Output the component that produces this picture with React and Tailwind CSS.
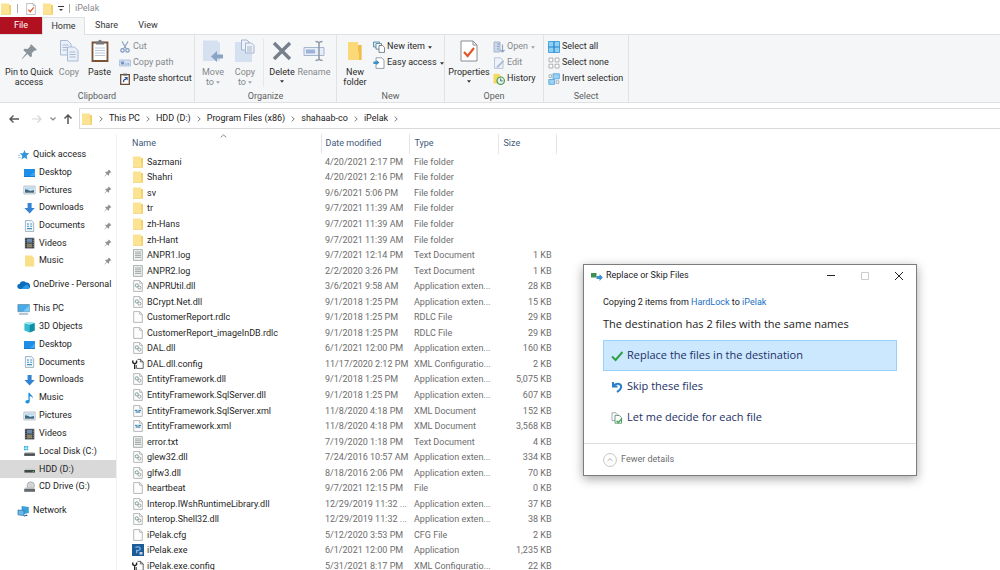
import React, { useState } from 'react';

const Folder = ({ className = 'w-3 h-3' }) => (
  <svg viewBox="0 0 12 12" className={className}>
    <path d="M1 .5h8v1.5h2v9.5H1z" fill="#fbe393" />
    <path d="M9 2h2v9.5H9.6V7.5L9 7z" fill="#f2cf69" />
    <path d="M1 11h9.5v.6H1z" fill="#eecb68" />
  </svg>
);

const Page = ({ children }) => (
  <svg viewBox="0 0 12 12" className="w-3 h-3">
    <path d="M1.7.6h6l2.600 2.600v8.200H1.700z" fill="#fdfdfd" stroke="#a3a6a8" strokeWidth=".8" />
    <path d="M7.600.6v2.700h2.700" fill="none" stroke="#a3a6a8" strokeWidth=".7" />
    {children}
  </svg>
);

const FileIcon = ({ kind }) => {
  switch (kind) {
    case 'folder':
      return <Folder />;
    case 'text':
      return (
        <svg viewBox="0 0 12 12" className="w-3 h-3">
          <path d="M1.500.6h8.800v10.800H1.500z" fill="#f1f2f2" stroke="#98a0a0" strokeWidth=".8" />
          <path d="M3 3h6M3 4.800h6M3 6.600h6M3 8.400h6" stroke="#8b9494" strokeWidth=".8" />
        </svg>
      );
    case 'dll':
      return (
        <Page>
          <circle cx="4.800" cy="5.400" r="1.600" fill="none" stroke="#7d9a96" strokeWidth="1" />
          <circle cx="7.400" cy="7.600" r="1.500" fill="none" stroke="#8fa3a0" strokeWidth="1" />
        </Page>
      );
    case 'xml':
      return (
        <Page>
          <path d="M2.800 4.600h6.400v3.600H2.800z" fill="#cfe3ee" />
          <path d="M3 5.400h2.200M6.400 5.400H9M4 7h4" stroke="#3c7fa3" strokeWidth="1" />
        </Page>
      );
    case 'config':
      return (
        <svg viewBox="0 0 12 12" className="w-3 h-3">
          <path d="M5.500 1.400h3l2.700 2.400v6.600H4.500V7" fill="#fff" stroke="#444" strokeWidth=".8" />
          <path d="M8.400 1.400v2.500h2.800" fill="none" stroke="#444" strokeWidth=".8" />
          <path d="M.8 2.500v2.200l1.900 1.200 1.900-1.200V2.500M2.700 5.500v5.400" fill="none" stroke="#222" strokeWidth="1.400" />
        </svg>
      );
    case 'exe':
      return (
        <svg viewBox="0 0 12 12" className="w-3 h-3">
          <path d="M0 0h12v12H0z" fill="#1d5a96" />
          <path d="M3.400 3.600c2-1.600 5-.6 4.800 1.400-.2 1.500-2 1.700-3.600 1.500v2.800" fill="none" stroke="#7db8e8" strokeWidth="1.300" />
          <path d="M7.500 8h3v2.600h-3z" fill="#c8d4dc" />
        </svg>
      );
    default:
      return <Page />;
  }
};

const NavIcon = ({ kind }) => {
  const paths = {
    star: (
      <>
        <path d="M7.500 1l1.200 3.100 3.600.2-2.700 2.400.8 3.600-3-1.800-2.900 2 .9-3.800-2.800-2.200 3.500-.3z" fill="#2f95dd" />
        <path d="M1 6.500h2M1.200 8.500h2.200" stroke="#7fbfee" strokeWidth=".8" />
      </>
    ),
    desktop: (
      <>
        <path d="M1 2h11v8H1z" fill="#1d8fe8" />
        <path d="M6 10l6-6v6z" fill="#3aa8f5" />
        <path d="M1 9.200h11v.8H1z" fill="#1173c4" />
      </>
    ),
    pictures: (
      <>
        <path d="M.9 2.100h11.200v7.800H.9z" fill="#fff" stroke="#a0acb5" strokeWidth=".8" />
        <path d="M2 3.200h9v2.400H2z" fill="#b5d9f2" />
        <path d="M2 5.200l3 .6 2 1 4-.8v2.800H2z" fill="#3f6a85" />
      </>
    ),
    downloads: <path d="M4.600 1h4v5h3.200l-5.200 5.400L1.400 6h3.200z" fill="#3384d4" />,
    documents: (
      <>
        <path d="M2.400.6h6l2.300 2.200v8.600H2.400z" fill="#f4fafd" stroke="#8ba1b0" strokeWidth=".8" />
        <path d="M4 4h2M7.200 4h2M4 6.200h2M7.200 6.200h2M4 8.600h5" stroke="#3f8fc0" strokeWidth="1.100" />
      </>
    ),
    videos: (
      <>
        <path d="M1.900.8h9.400v10.600H1.900z" fill="#343a42" />
        <path d="M4 1.600h5.200v4H4z" fill="#6d89a8" />
        <path d="M4 6.500h5.200v4H4z" fill="#8c8468" />
        <path d="M2.900 1.200v10M10.300 1.200v10" stroke="#c9ccd0" strokeWidth=".7" strokeDasharray="1 1" />
      </>
    ),
    folder: <path d="M2 .6h7.500v1.600h1.700v9.300H2z" fill="#fbdf88" />,
    cloud: (
      <>
        <path d="M3 10a2.600 2.600 0 01-.3-5.200A3.600 3.600 0 019 3.600 3.200 3.200 0 0110.600 10z" fill="#0f6cbd" />
        <path d="M4 10l5-4.200a2.400 2.400 0 012.800 1.400A1.600 1.600 0 0111 10z" fill="#2b9be8" />
      </>
    ),
    pc: (
      <>
        <path d="M.9 1.500h11.400v7.200H.9z" fill="#45abe9" stroke="#5f87a3" strokeWidth=".7" />
        <path d="M6 8.500l6-6v6z" fill="#7ac8f6" />
        <path d="M2 10.500h9v1H2z" fill="#6e8ea5" />
      </>
    ),
    cube: (
      <>
        <path d="M1.400 2.600L5 1l6.600 1v7.600L6.600 11.400 1.400 9.600z" fill="#36bcd0" />
        <path d="M6.600 3.800l5-1.800v7.600l-5 1.800z" fill="#138ca6" />
        <path d="M1.400 2.600L5 1l6.600 1-5 1.800z" fill="#9be8ef" />
      </>
    ),
    music: <path d="M5.400.8h1.300c.3 2 3.500 2.600 3.200 5.600-.5-1.300-1.600-2-3.200-2.100v4.900c0 1.300-1 2.200-2.300 2.200s-2-.7-2-1.600c0-1.200 1.400-2 3-1.700z" fill="#1a93dc" />,
    disk: (
      <>
        <path d="M1 1h1.800v1.800H1zM3.400 1h1.800v1.800H3.400zM1 3.400h1.800v1.800H1zM3.400 3.400h1.800v1.800H3.400z" fill="#27b2e0" />
        <path d="M2.200 7h8.800l1 1.500H1.200z" fill="#c3c8cb" />
        <path d="M1.200 8.300H12v2.600H1.200z" fill="#4a5054" />
      </>
    ),
    drive: (
      <>
        <path d="M2.400 5.600h8.400l1 1.600H1.400z" fill="#c9cccd" />
        <path d="M1.400 7H12v2.600H1.400z" fill="#3e4a46" />
        <path d="M9.600 8h1.400v.8H9.600z" fill="#4fd07a" />
      </>
    ),
    cd: (
      <>
        <circle cx="7.800" cy="4.500" r="3.700" fill="#d5d7d9" stroke="#9b9fa3" strokeWidth=".7" />
        <circle cx="7.800" cy="4.500" r="1" fill="#fff" stroke="#9b9fa3" strokeWidth=".5" />
        <path d="M1.200 8h10.800v2.800H1.200z" fill="#65696c" />
        <path d="M2.200 6.600h8.600l1.200 1.500H1.200z" fill="#b9bdbf" />
      </>
    ),
    network: (
      <>
        <path d="M4.600 1l7.200 1v6l-7.200 1.400z" fill="#3c9fdc" />
        <path d="M1 5l6 .6v5L1 9.800z" fill="#68b9ea" stroke="#2472a8" strokeWidth=".7" />
        <path d="M7 10.400l3-.8.600 1.200-3.600.8z" fill="#37607d" />
      </>
    ),
  };
  return (
    <svg viewBox="0 0 13 12" className="w-[13px] h-3 shrink-0">
      {paths[kind]}
    </svg>
  );
};

const PinIcon = ({ className, fill }) => (
  <svg viewBox="0 0 12 12" className={className}>
    <path d="M7.200.8l4 4-1 .6-.7-.1-1.900 2 .1 2-.9.800L4.500 7.800 1 11.200l-.4-.3 3.200-3.800L1.600 4.900l.9-.8 2.200.1 1.900-1.900-.1-.8z" fill={fill} />
  </svg>
);

const Caret = ({ className = 'text-[#333]' }) => (
  <svg viewBox="0 0 5 3" className={`w-1 h-[3px] ${className}`}>
    <path d="M0 0h5L2.500 3z" fill="currentColor" />
  </svg>
);

const CheckPage = ({ className }) => (
  <svg viewBox="0 0 18 22" className={className}>
    <path d="M1 1h12l4 4v16H1z" fill="#fff" stroke="#8a8d90" />
    <path d="M13 1v4h4" fill="none" stroke="#8a8d90" />
    <path d="M4 12l3.600 4L14 8" fill="none" stroke="#e0592a" strokeWidth="2.200" />
  </svg>
);

const bigIcons = {
  pin: <PinIcon className="w-[17px] h-[17px]" fill="#8a9399" />,
  copy: (
    <svg viewBox="0 0 20 24" className="w-5 h-6">
      <path d="M1.500 1.500h7l3.500 3.500v11H1.500z" fill="#eaf0f9" stroke="#a9bad4" />
      <path d="M3.500 6h6M3.500 8.500h6M3.500 11h6" stroke="#a9bad4" />
      <path d="M8.500 8h7l3.500 3.500V22H8.500z" fill="#eaf0f9" stroke="#a9bad4" />
      <path d="M10.500 13h6M10.500 15.500h6M10.500 18h6" stroke="#a9bad4" />
    </svg>
  ),
  paste: (
    <svg viewBox="0 0 18 24" className="w-[18px] h-6">
      <path d="M1.500 3.500h15v18.500h-15z" fill="#fff" stroke="#7a5236" strokeWidth="1.800" />
      <path d="M5 2.500h2.200a1.800 1.800 0 013.600 0H13v3H5z" fill="#78797c" />
      <path d="M4 9h10M4 11.500h10M4 14h10M4 16.500h10" stroke="#b9c9dd" />
    </svg>
  ),
  move: (
    <svg viewBox="0 0 22 24" className="w-[22px] h-6">
      <path d="M1 1.500h15v2h2V22H1z" fill="#d5e0f0" />
      <path d="M21 15.500h-6V12l-6 5.500 6 5.500v-3.500h6z" fill="#8ba3c4" />
    </svg>
  ),
  copyto: (
    <svg viewBox="0 0 22 24" className="w-[22px] h-6">
      <path d="M1 3h15v2h2V23H1z" fill="#d5e0f0" />
      <path d="M7.500 1h5.500l2 2v8H7.500z" fill="#eef3fa" stroke="#a3b5d0" />
      <path d="M11.500 4h6l2.500 2.500V14h-8.500z" fill="#eef3fa" stroke="#a3b5d0" />
      <path d="M13 8h5M13 10h5M13 12h5" stroke="#a3b5d0" />
    </svg>
  ),
  del: (
    <svg viewBox="0 0 20 22" className="w-5 h-[22px]">
      <path d="M2 3l16 16M18 3L2 19" stroke="#75808c" strokeWidth="3.400" />
    </svg>
  ),
  rename: (
    <svg viewBox="0 0 22 22" className="w-[22px] h-[22px]">
      <path d="M1 7.500h20v8H1z" fill="#e6edf7" stroke="#a6b6cf" />
      <path d="M3 9.500h9v4H3z" fill="#9db4d6" />
      <path d="M12.500 1.500c2 0 3 .5 3.500 1.500.5-1 1.500-1.500 3.500-1.500M16 3v16M12.500 20.500c2 0 3-.5 3.500-1.500.5 1 1.500 1.500 3.500 1.500" fill="none" stroke="#8c97a6" strokeWidth="1.500" />
    </svg>
  ),
  newfolder: (
    <svg viewBox="0 0 16 22" className="w-4 h-[22px]">
      <path d="M1 2h10v3h3.500v15H1z" fill="#fbd978" />
      <path d="M11 5h3.500v15H12v-8l-1-1z" fill="#efbd4b" />
    </svg>
  ),
  properties: <CheckPage className="w-[18px] h-[22px]" />,
};

const smallIcons = {
  cut: (
    <>
      <path d="M3 .5l4.200 7M9 .5l-4.200 7" stroke="#8ba0bd" strokeWidth="1.200" />
      <circle cx="3.500" cy="9.400" r="1.700" fill="none" stroke="#7c97c0" strokeWidth="1.200" />
      <circle cx="8.500" cy="9.400" r="1.700" fill="none" stroke="#7c97c0" strokeWidth="1.200" />
    </>
  ),
  path: (
    <>
      <path d="M.5 3h11v6H.5z" fill="#d3e0f3" stroke="#a9bcdc" strokeWidth=".8" />
      <path d="M2 4.500l1 3 1-3 1 3M6.500 7h1M8.500 7h1.500" fill="none" stroke="#5e7eb0" strokeWidth=".9" />
    </>
  ),
  shortcut: (
    <>
      <path d="M1.700 1.700h8.600v9.600H1.700z" fill="#fff" stroke="#6b4a35" strokeWidth="1.300" />
      <path d="M4 .6h4v2H4z" fill="#666" />
      <path d="M4.600 9.200c-.3-2 .7-3 2.500-3.100" fill="none" stroke="#2a4d8f" strokeWidth="1.300" />
      <path d="M5.200 4h3.400v3.400z" fill="#2a4d8f" />
    </>
  ),
  newitem: (
    <>
      <path d="M.5 1h6v5h-6z" fill="#d5ecf7" stroke="#4f8ba8" strokeWidth=".9" />
      <path d="M3 2.600h5.500v5.500H3z" fill="#fff" stroke="#5c7f93" strokeWidth=".9" />
      <path d="M6 4.500h3.600l1.900 1.900v5H6z" fill="#fff" stroke="#6c7a85" strokeWidth=".9" />
    </>
  ),
  easy: (
    <>
      <path d="M3 .8h5.600L11 3v8.400H3z" fill="#fff" stroke="#8c98a1" strokeWidth=".9" />
      <path d="M.4 7V4.400h3V3l3 2.600-3 2.600V7z" fill="#3d8fc4" />
    </>
  ),
  open: (
    <>
      <path d="M1 1h6v10H1z" fill="#cad7ea" stroke="#9fb0ca" strokeWidth=".9" />
      <path d="M4 3h3M4 5.500h2M4 8h2" stroke="#8499bd" strokeWidth=".9" />
      <path d="M9.500 3.500v7.500M7.500 9l2 2 2-2" fill="none" stroke="#8da3c7" strokeWidth="1.200" />
    </>
  ),
  edit: (
    <>
      <path d="M1.500.8h6l2.500 2.400v8.200H1.500z" fill="#eef2f9" stroke="#b3bfd2" strokeWidth=".9" />
      <path d="M4 9l5.800-5.600 1.200 1.200-5.600 5.600-2 .6z" fill="#a7b9d6" />
    </>
  ),
  history: (
    <>
      <path d="M.5.8h6v1.400H8v8.300H.5z" fill="#f5da62" />
      <circle cx="7.700" cy="7.700" r="3.700" fill="#e7f5ea" stroke="#4a9a5b" strokeWidth="1.200" />
      <path d="M7.700 5.400v2.500h1.900" fill="none" stroke="#3b5878" strokeWidth=".9" />
    </>
  ),
  all: (
    <>
      <path d="M.5.5h11v11H.5z" fill="#8fd0f6" stroke="#3f9bd6" strokeWidth=".9" />
      <path d="M6 .5v11M.5 6h11" stroke="#2a84c4" strokeWidth="1.200" />
    </>
  ),
  none: (
    <path d="M1 1h3.800v3.800H1zM7.200 1H11v3.800H7.200zM1 7.200h3.800V11H1zM7.200 7.200H11V11H7.200z" fill="#fff" stroke="#9a9ea2" strokeWidth=".8" />
  ),
  invert: (
    <>
      <path d="M5 .8h6.300v5H5zM.8 6.500h5.800v4.800H.8z" fill="#9ad3f5" stroke="#4aa0d8" strokeWidth=".8" />
      <path d="M1 1.800h2.600v2.600H1zM8.200 7.800h2.600v2.600H8.200z" fill="#fff" stroke="#9a9ea2" strokeWidth=".8" />
    </>
  ),
};

const BigButton = ({ icon, lines, muted, caret, className }) => (
  <button className={`flex flex-col items-center shrink-0 ${className} ${muted ? 'text-[#84888c]' : 'text-[#2b2b2b]'}`}>
    <span className="h-6 flex items-center justify-center mb-1">{bigIcons[icon]}</span>
    {lines.map((line, i) => (
      <span key={line} className="leading-[10px] whitespace-nowrap flex items-center gap-[2px]">
        {line}
        {caret && lines.length > 1 && i === lines.length - 1 && <Caret className="text-[#a0a3a6]" />}
      </span>
    ))}
    {caret && lines.length === 1 && <span className="h-2 flex items-center"><Caret /></span>}
  </button>
);

const SmallButton = ({ icon, label, muted, caret }) => (
  <button className={`h-4 flex items-center gap-[2px] whitespace-nowrap ${muted ? 'text-[#84888c]' : 'text-[#2b2b2b]'}`}>
    <svg viewBox="0 0 12 12" className="w-3 h-3 shrink-0">{smallIcons[icon]}</svg>
    {label}
    {caret && <Caret className={muted ? 'ml-px text-[#a0a3a6]' : 'ml-px text-[#333]'} />}
  </button>
);

const Group = ({ label, className, children }) => (
  <div className={`flex flex-col border-r border-[#e1e2e3] ${className}`}>
    <div className="flex-1 flex items-start pt-1">{children}</div>
    <div className="h-3 text-center leading-3 text-[#5c5f62]">{label}</div>
  </div>
);

const quickAccess = [
  { label: 'Quick access', icon: 'star', root: true },
  { label: 'Desktop', icon: 'desktop', pinned: true },
  { label: 'Pictures', icon: 'pictures', pinned: true },
  { label: 'Downloads', icon: 'downloads', pinned: true },
  { label: 'Documents', icon: 'documents', pinned: true },
  { label: 'Videos', icon: 'videos', pinned: true },
  { label: 'Music', icon: 'folder', pinned: true },
];

const thisPc = [
  { label: 'This PC', icon: 'pc', root: true },
  { label: '3D Objects', icon: 'cube' },
  { label: 'Desktop', icon: 'desktop' },
  { label: 'Documents', icon: 'documents' },
  { label: 'Downloads', icon: 'downloads' },
  { label: 'Music', icon: 'music' },
  { label: 'Pictures', icon: 'pictures' },
  { label: 'Videos', icon: 'videos' },
  { label: 'Local Disk (C:)', icon: 'disk' },
  { label: 'HDD (D:)', icon: 'drive', active: true },
  { label: 'CD Drive (G:)', icon: 'cd' },
];

const files = [
  ['Sazmani', '4/20/2021 2:17 PM', 'File folder', '', 'folder'],
  ['Shahri', '4/20/2021 2:16 PM', 'File folder', '', 'folder'],
  ['sv', '9/6/2021 5:06 PM', 'File folder', '', 'folder'],
  ['tr', '9/7/2021 11:39 AM', 'File folder', '', 'folder'],
  ['zh-Hans', '9/7/2021 11:39 AM', 'File folder', '', 'folder'],
  ['zh-Hant', '9/7/2021 11:39 AM', 'File folder', '', 'folder'],
  ['ANPR1.log', '9/7/2021 12:14 PM', 'Text Document', '1 KB', 'text'],
  ['ANPR2.log', '2/2/2020 3:26 PM', 'Text Document', '1 KB', 'text'],
  ['ANPRUtil.dll', '3/6/2021 9:58 AM', 'Application exten...', '28 KB', 'dll'],
  ['BCrypt.Net.dll', '9/1/2018 1:25 PM', 'Application exten...', '15 KB', 'dll'],
  ['CustomerReport.rdlc', '9/1/2018 1:25 PM', 'RDLC File', '29 KB', 'file'],
  ['CustomerReport_imageInDB.rdlc', '9/1/2018 1:25 PM', 'RDLC File', '29 KB', 'file'],
  ['DAL.dll', '6/1/2021 12:00 PM', 'Application exten...', '160 KB', 'dll'],
  ['DAL.dll.config', '11/17/2020 2:12 PM', 'XML Configuratio...', '2 KB', 'config'],
  ['EntityFramework.dll', '9/1/2018 1:25 PM', 'Application exten...', '5,075 KB', 'dll'],
  ['EntityFramework.SqlServer.dll', '9/1/2018 1:25 PM', 'Application exten...', '607 KB', 'dll'],
  ['EntityFramework.SqlServer.xml', '11/8/2020 4:18 PM', 'XML Document', '152 KB', 'xml'],
  ['EntityFramework.xml', '11/8/2020 4:18 PM', 'XML Document', '3,568 KB', 'xml'],
  ['error.txt', '7/19/2020 1:18 PM', 'Text Document', '4 KB', 'text'],
  ['glew32.dll', '7/24/2016 10:57 AM', 'Application exten...', '334 KB', 'dll'],
  ['glfw3.dll', '8/18/2016 2:06 PM', 'Application exten...', '70 KB', 'dll'],
  ['heartbeat', '9/7/2021 12:15 PM', 'File', '0 KB', 'file'],
  ['Interop.IWshRuntimeLibrary.dll', '12/29/2019 11:32 ...', 'Application exten...', '37 KB', 'dll'],
  ['Interop.Shell32.dll', '12/29/2019 11:32 ...', 'Application exten...', '38 KB', 'dll'],
  ['iPelak.cfg', '5/12/2020 3:53 PM', 'CFG File', '2 KB', 'file'],
  ['iPelak.exe', '6/1/2021 12:00 PM', 'Application', '1,235 KB', 'exe'],
  ['iPelak.exe.config', '5/31/2021 8:17 PM', 'XML Configuratio...', '22 KB', 'config'],
];

const crumbs = ['This PC', 'HDD (D:)', 'Program Files (x86)', 'shahaab-co', 'iPelak'];

const NavItem = ({ item }) => (
  <li className={item.active ? 'bg-[#d9d9d9]' : ''}>
    <a href="#" className={`h-full flex items-center pr-1 gap-[3px] whitespace-nowrap ${item.root ? 'pl-[17px]' : 'pl-[23px]'}`}>
      <NavIcon kind={item.icon} />
      <span className="flex-1">{item.label}</span>
      {item.pinned && <PinIcon className="w-2 h-2 shrink-0" fill="#8e9194" />}
    </a>
  </li>
);

const Chevron = () => (
  <svg viewBox="0 0 4 6" className="w-1 h-[6px] shrink-0">
    <path d="M.8.6L3.200 3 .8 5.400" fill="none" stroke="#666" strokeWidth=".9" />
  </svg>
);

const Ribbon = () => (
  <div className="h-[69px] flex bg-[#f5f6f7] border-y border-[#dfe0e1]">
    <Group label="Clipboard" className="w-[195px]">
      <BigButton icon="pin" lines={['Pin to Quick', 'access']} className="w-[58px]" />
      <BigButton icon="copy" lines={['Copy']} muted className="w-[22px]" />
      <BigButton icon="paste" lines={['Paste']} className="w-[39px]" />
      <div className="flex flex-col">
        <SmallButton icon="cut" label="Cut" muted />
        <SmallButton icon="path" label="Copy path" muted />
        <SmallButton icon="shortcut" label="Paste shortcut" />
      </div>
    </Group>
    <Group label="Organize" className="w-[142px]">
      <BigButton icon="move" lines={['Move', 'to']} muted caret className="w-9" />
      <BigButton icon="copyto" lines={['Copy', 'to']} muted caret className="w-7" />
      <span className="w-px h-12 ml-1 bg-[#e6e7e8]" />
      <BigButton icon="del" lines={['Delete']} caret className="w-9" />
      <BigButton icon="rename" lines={['Rename']} muted className="w-7" />
    </Group>
    <Group label="New" className="w-[108px]">
      <BigButton icon="newfolder" lines={['New', 'folder']} className="w-9" />
      <div className="flex flex-col">
        <SmallButton icon="newitem" label="New item" caret />
        <SmallButton icon="easy" label="Easy access" caret />
      </div>
    </Group>
    <Group label="Open" className="w-[99px]">
      <BigButton icon="properties" lines={['Properties']} caret className="w-12" />
      <div className="flex flex-col">
        <SmallButton icon="open" label="Open" muted caret />
        <SmallButton icon="edit" label="Edit" muted />
        <SmallButton icon="history" label="History" />
      </div>
    </Group>
    <Group label="Select" className="w-[85px]">
      <div className="flex flex-col pl-1">
        <SmallButton icon="all" label="Select all" />
        <SmallButton icon="none" label="Select none" />
        <SmallButton icon="invert" label="Invert selection" />
      </div>
    </Group>
  </div>
);

const AddressBar = () => (
  <div className="h-[31px] flex items-center">
    <div className="w-[79px] pl-2 flex items-center gap-[7px]">
      <button aria-label="Back">
        <svg viewBox="0 0 12 10" className="w-3 h-[10px]"><path d="M11 5H2M5.500 1.500L2 5l3.500 3.500" fill="none" stroke="#555" strokeWidth="1.400" /></svg>
      </button>
      <button aria-label="Forward" className="ml-1">
        <svg viewBox="0 0 12 10" className="w-3 h-[10px]"><path d="M1 5h9M6.500 1.500L10 5 6.500 8.500" fill="none" stroke="#d5d5d5" strokeWidth="1.200" /></svg>
      </button>
      <button aria-label="Recent locations">
        <svg viewBox="0 0 6 4" className="w-[6px] h-1"><path d="M.5.5L3 3 5.500.5" fill="none" stroke="#888" strokeWidth="1.200" /></svg>
      </button>
      <button aria-label="Up">
        <svg viewBox="0 0 10 12" className="w-[10px] h-3"><path d="M5 11V2M1.500 5.500L5 2l3.500 3.500" fill="none" stroke="#555" strokeWidth="1.500" /></svg>
      </button>
    </div>
    <div className="flex-1 h-[21px] flex items-center gap-[6px] pl-px border border-r-0 border-[#d9d9d9]">
      <Folder className="w-3 h-3" />
      <Chevron />
      {crumbs.map(crumb => (
        <React.Fragment key={crumb}>
          <button className="whitespace-nowrap text-[#1b1b1b]">{crumb}</button>
          <Chevron />
        </React.Fragment>
      ))}
    </div>
  </div>
);

const FileTable = () => (
  <table className="h-[440px] w-[440px] table-fixed text-left">
    <thead>
      <tr className="h-5 text-[#44597a]">
        <th className="w-[204px] p-0 pl-[15px] font-normal border-r border-[#e5e5e5] relative">
          Name
          <svg viewBox="0 0 8 4" className="absolute left-[103px] top-0 w-[7px] h-1"><path d="M.8 3.500L4 .8l3.200 2.700" fill="none" stroke="#777" /></svg>
        </th>
        <th className="w-[88px] p-0 pl-1 font-normal border-r border-[#e5e5e5]">Date modified</th>
        <th className="w-[89px] p-0 pl-[5px] font-normal border-r border-[#e5e5e5]">Type</th>
        <th className="p-0 pl-[5px] font-normal border-r border-[#e5e5e5]">Size</th>
      </tr>
    </thead>
    <tbody className="text-[#6d6d6d] leading-3 whitespace-nowrap">
      {files.map(([name, date, type, size, kind]) => (
        <tr key={name}>
          <td className="p-0 pl-[15px] text-[#1f1f1f]">
            <span className="flex items-center gap-[3px]">
              <FileIcon kind={kind} />
              {name}
            </span>
          </td>
          <td className="p-0 pl-1">{date}</td>
          <td className="p-0 pl-[5px]">{type}</td>
          <td className="p-0 pr-[5px] text-right">{size}</td>
        </tr>
      ))}
    </tbody>
  </table>
);

const choices = [
  {
    label: 'Replace the files in the destination',
    icon: <path d="M1 6.500l3.600 3.500L11.500 2" fill="none" stroke="#2fa045" strokeWidth="2" />,
  },
  {
    label: 'Skip these files',
    icon: <path d="M2 1v4.500h4.500M2.500 5c2-3.500 7.700-3 7.700.8 0 2.800-2.200 4-4.200 5.200" fill="none" stroke="#2b7fc9" strokeWidth="2" />,
  },
  {
    label: 'Let me decide for each file',
    icon: (
      <>
        <path d="M1 .8h4l1.800 1.800v6H1z" fill="#fff" stroke="#8d9499" strokeWidth=".8" />
        <path d="M4 3.400h4.200l2.300 2.200v5.600H4z" fill="#fff" stroke="#5d8d69" strokeWidth=".9" />
        <path d="M5.600 8.800l1.700 1.700 3.700-4" fill="none" stroke="#3da356" strokeWidth="1.300" />
      </>
    ),
  },
];

const ReplaceDialog = () => {
  const [selected, setSelected] = useState(0);

  return (
    <div role="dialog" aria-labelledby="dialog-title" className="absolute left-[583px] top-[264px] w-[334px] bg-white border border-[#7c7c7c] shadow-[0_3px_10px_rgba(0,0,0,0.35)]">
      <div className="h-[22px] pl-[7px] pr-[13px] flex items-center">
        <svg viewBox="0 0 12 10" className="w-3 h-[10px] mr-[3px]">
          <path d="M0 2h5.500v4.500H0z" fill="#3d9150" />
          <path d="M5.500 5h3V3l3.300 3.500L8.500 10V8h-3z" fill="#3b8fd4" />
        </svg>
        <span id="dialog-title" className="flex-1 text-[#1b1b1b]">Replace or Skip Files</span>
        <div className="flex items-center gap-[26px]">
          <button aria-label="Minimize"><svg viewBox="0 0 8 8" className="w-2 h-2"><path d="M0 3.500h8" stroke="#222" /></svg></button>
          <button aria-label="Maximize" disabled><svg viewBox="0 0 8 8" className="w-2 h-2"><path d="M.5.5h7v7h-7z" fill="none" stroke="#ccc" /></svg></button>
          <button aria-label="Close"><svg viewBox="0 0 8 8" className="w-2 h-2"><path d="M0 0l8 8M8 0L0 8" stroke="#222" /></svg></button>
        </div>
      </div>
      <div className="px-[19px] pt-[9px] pb-[10px]">
        <p className="leading-3 text-[#222]">
          Copying 2 items from <a href="#" className="text-[#1a6fc4]">HardLock</a> to <a href="#" className="text-[#1a6fc4]">iPelak</a>
        </p>
        <h1 className="my-2 text-[11px] leading-4 text-[#222] font-['Open_Sans','Noto_Sans',sans-serif]">The destination has 2 files with the same names</h1>
        <div className="flex flex-col">
          {choices.map((choice, i) => (
            <button
              key={choice.label}
              onClick={() => setSelected(i)}
              className={`h-[31px] px-[7px] flex items-center gap-1 border text-[11px] text-[#1c2f66] font-['Open_Sans','Noto_Sans',sans-serif] ${selected === i ? 'bg-[#cce8ff] border-[#99d1ff]' : 'border-transparent'}`}
            >
              <svg viewBox="0 0 12 12" className="w-3 h-3">{choice.icon}</svg>
              {choice.label}
            </button>
          ))}
        </div>
      </div>
      <div className="h-8 px-[19px] flex items-center border-t border-[#dfdfdf]">
        <button className="flex items-center gap-1 text-[#6d6d6d]">
          <svg viewBox="0 0 14 14" className="w-[14px] h-[14px]">
            <circle cx="7" cy="7" r="6.400" fill="none" stroke="#bdbdbd" strokeWidth=".9" />
            <path d="M4.500 8L7 5.600 9.500 8" fill="none" stroke="#aaa" />
          </svg>
          Fewer details
        </button>
      </div>
    </div>
  );
};

const App = () => (
  <div className="h-screen overflow-hidden relative bg-white text-[9px] text-[#222] font-['Roboto','Open_Sans',sans-serif]">
    <div className="h-[17px] flex items-center text-[#8a8a8a]">
      <Folder className="w-3 h-3" />
      <span className="w-px h-[9px] ml-[5px] bg-[#aaa]" />
      <CheckPage className="w-[10px] h-3 ml-2" />
      <Folder className="w-3 h-3 ml-[6px]" />
      <svg viewBox="0 0 6 6" className="w-[6px] h-[6px] ml-1"><path d="M0 .5h6" stroke="#333" /><path d="M1 3h4L3 5z" fill="#333" /></svg>
      <span className="w-px h-[9px] mx-[5px] bg-[#aaa]" />
      iPelak
    </div>
    <nav className="h-[17px] flex text-[#333]">
      <button className="w-[42px] bg-[#b01020] text-white">File</button>
      <button className="w-[43px] -mb-px bg-[#f5f6f7] border border-b-0 border-[#dfe0e1] relative">Home</button>
      <button className="w-[43px]">Share</button>
      <button className="w-10">View</button>
    </nav>
    <Ribbon />
    <AddressBar />
    <div className="flex items-start">
      <aside className="w-[117px] h-[436px] shrink-0 pt-3 border-r border-[#f0f0f0]">
        <ul className="h-[124px] grid auto-rows-fr">
          {quickAccess.map(item => <NavItem key={item.label} item={item} />)}
        </ul>
        <ul className="h-[18px] grid my-[6px]">
          <NavItem item={{ label: 'OneDrive - Personal', icon: 'cloud', root: true }} />
        </ul>
        <ul className="h-[196px] grid auto-rows-fr">
          {thisPc.map(item => <NavItem key={item.label} item={item} />)}
        </ul>
        <ul className="h-[18px] grid mt-[6px]">
          <NavItem item={{ label: 'Network', icon: 'network', root: true }} />
        </ul>
      </aside>
      <FileTable />
    </div>
    <ReplaceDialog />
  </div>
);

export default App;
